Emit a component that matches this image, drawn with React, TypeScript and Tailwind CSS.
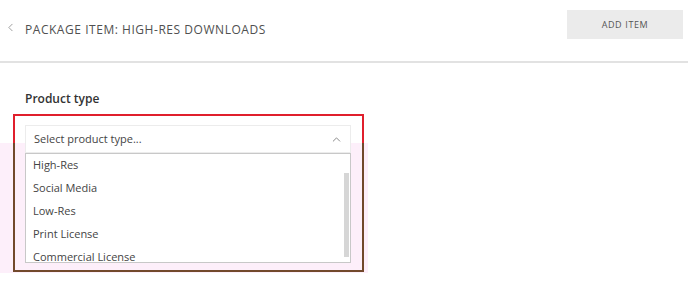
import React from "react";
import { ChevronLeft, ChevronUp } from "lucide-react";

const options = ["High-Res", "Social Media", "Low-Res", "Print License", "Commercial License"];

export default function App() {
  return (
    <div className="w-[688px] h-[282px] bg-white overflow-hidden font-['Open_Sans',sans-serif] relative">
      {/* header */}
      <div className="h-[63px] flex items-center border-b-2 border-[#e2e2e2]">
        <ChevronLeft size={13} strokeWidth={1.3} className="ml-[4px] -mt-[7px] text-[#777]" />
        <h1 className="ml-[8px] -mt-[2px] text-[12px] tracking-[0.045em] text-[#505050]">PACKAGE ITEM: HIGH-RES DOWNLOADS</h1>
        <button className="ml-auto mr-[5px] -mt-[12px] w-[116px] h-[29px] bg-[#ebebeb] text-[9px] tracking-[0.07em] text-[#555]">
          ADD ITEM
        </button>
      </div>

      {/* pink highlight behind the annotation */}
      <div className="absolute left-0 top-[143px] w-[368px] h-[130px] bg-[#fdeffa]" />

      <div className="relative pt-[27px]">
        <label className="block ml-[25px] text-[12px] font-semibold text-[#333]">Product type</label>

        <div className="ml-[13px] mt-[6px] w-[351px] h-[158px] border-2 [border-image:linear-gradient(to_bottom,#e01f2c_18%,#72492c_18%)_1] pl-[10px] pt-[9px]">
          <div className="w-[326px] h-[28px] bg-white border border-[#ececec] flex items-center px-[8px]">
            <span className="text-[11px] text-[#444]">Select product type...</span>
            <ChevronUp size={13} strokeWidth={1.4} className="ml-auto -mr-[1px] text-[#666]" />
          </div>
          <div className="relative w-[326px] h-[110px] bg-white border border-[#c8c8c8] overflow-hidden">
            {options.map((o) => (
              <div key={o} className="h-[23px] flex items-center px-[7px] text-[11px] text-[#444]">
                {o}
              </div>
            ))}
            <div className="absolute right-[1px] top-[19px] w-[5px] h-[84px] bg-[#d6d6d6]" />
          </div>
        </div>
      </div>
    </div>
  );
}
